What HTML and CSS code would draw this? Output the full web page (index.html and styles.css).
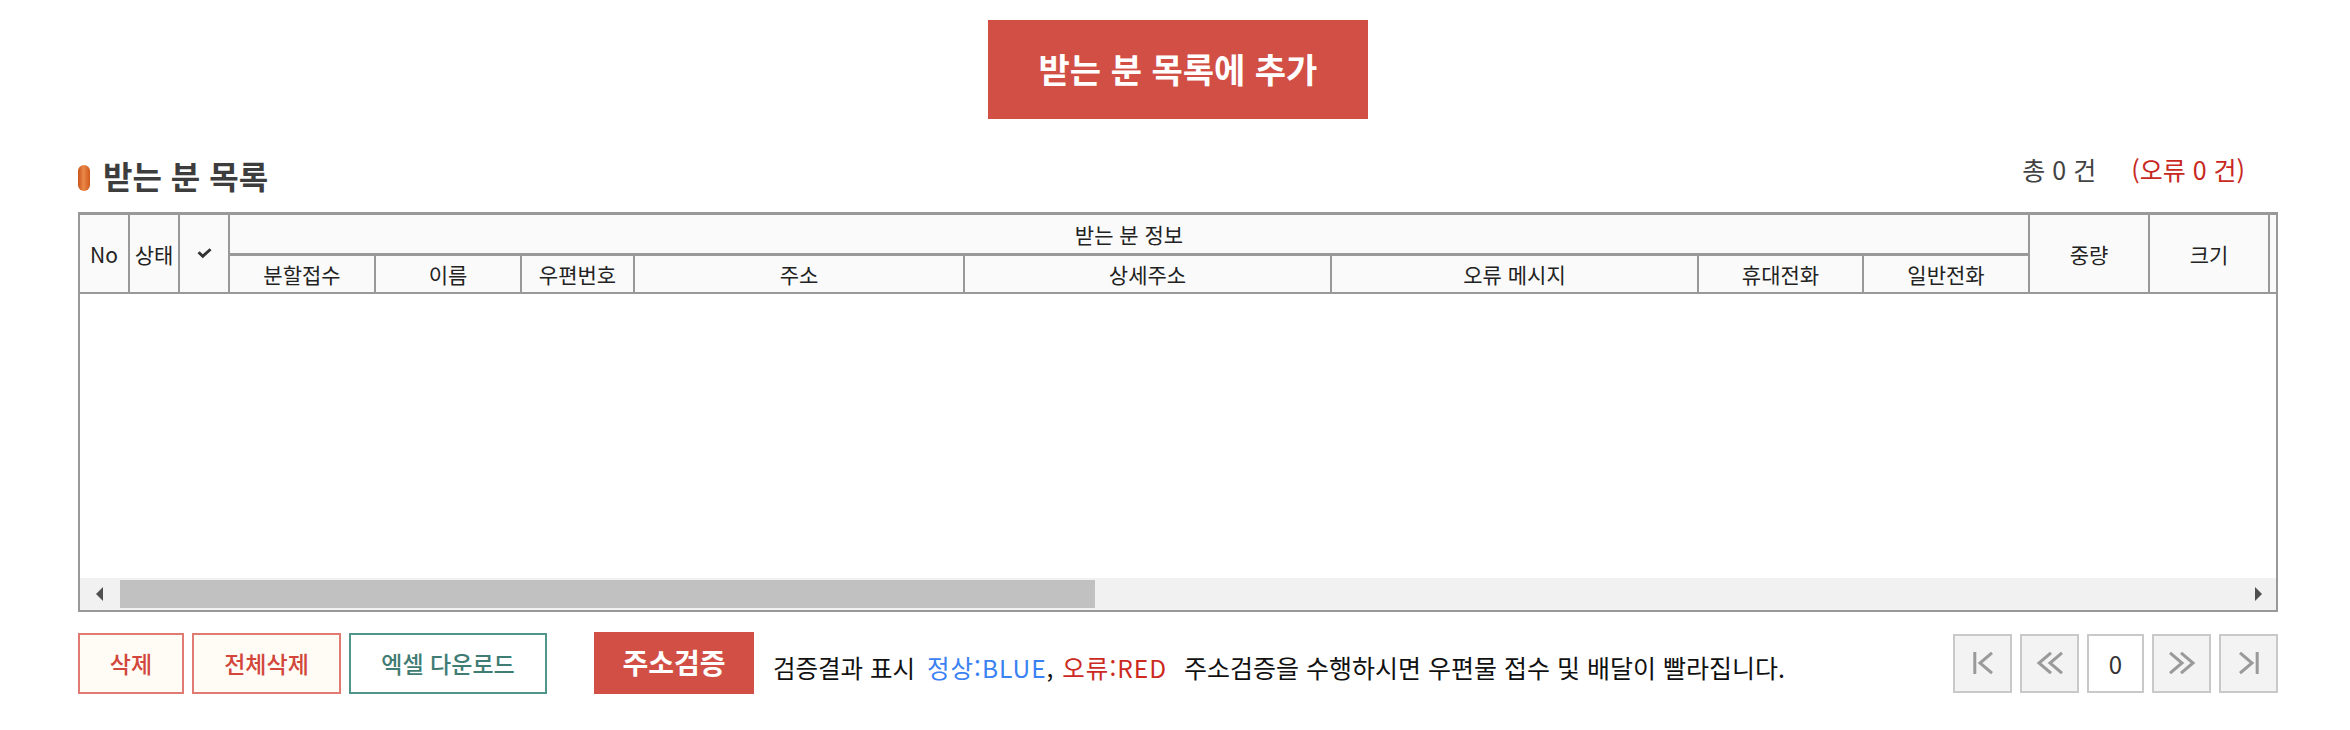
FILE: index.html
```html
<!DOCTYPE html>
<html lang="ko">
<head>
<meta charset="utf-8">
<title>받는 분 목록</title>
<link rel="stylesheet" href="styles.css">
</head>
<body>
<div class="page">
  <div class="top-actions">
    <button class="btn-add" type="button">받는 분 목록에 추가</button>
  </div>

  <div class="list-head">
    <h2 class="list-title"><span class="bullet"></span>받는 분 목록</h2>
    <div class="count">총 0 건 <span class="count-err">(오류 0 건)</span></div>
  </div>

  <div class="grid-box">
    <div class="grid-clip">
      <div class="grid-head">
        <div class="th rows">No</div>
        <div class="th rows">상태</div>
        <div class="th rows"><svg class="chk" width="15" height="11" viewBox="0 0 15 11"><path d="M0.5 5.2 L2.6 3.3 L5.8 6.3 L12.6 0.3 L14.5 2.2 L5.8 10.2 Z" fill="#333"/></svg></div>
        <div class="th group">받는 분 정보</div>
        <div class="th sub">분할접수</div>
        <div class="th sub">이름</div>
        <div class="th sub">우편번호</div>
        <div class="th sub">주소</div>
        <div class="th sub">상세주소</div>
        <div class="th sub">오류 메시지</div>
        <div class="th sub">휴대전화</div>
        <div class="th sub">일반전화</div>
        <div class="th rows">중량</div>
        <div class="th rows">크기</div>
        <div class="th rows"></div>
      </div>
    </div>
    <div class="grid-body"></div>
    <div class="hscroll">
      <span class="sb-arrow sb-left"><svg width="7" height="14" viewBox="0 0 7 14"><polygon points="7,0 0,7 7,14" fill="#505050"/></svg></span>
      <span class="sb-thumb"></span>
      <span class="sb-fill"></span>
      <span class="sb-arrow sb-right"><svg width="7" height="14" viewBox="0 0 7 14"><polygon points="0,0 7,7 0,14" fill="#505050"/></svg></span>
    </div>
  </div>

  <div class="bottom-bar">
    <div class="btn-group">
      <button class="btn-line btn-red btn-del" type="button">삭제</button>
      <button class="btn-line btn-red btn-delall" type="button">전체삭제</button>
      <button class="btn-line btn-teal" type="button">엑셀 다운로드</button>
    </div>
    <button class="btn-verify" type="button">주소검증</button>
    <p class="legend">검증결과 표시 <span class="ok">정상:BLUE</span>, <span class="err">오류:RED</span> <span class="note">주소검증을 수행하시면 우편물 접수 및 배달이 빨라집니다.</span></p>
    <div class="pager">
      <span class="pg"><svg width="20" height="22" viewBox="0 0 20 22"><path d="M1.8 0 V22 M19 0.8 L7 11 L19 21.2" stroke="#9a9a9a" stroke-width="3" fill="none"/></svg></span>
      <span class="pg"><svg width="28" height="22" viewBox="0 0 28 22"><path d="M15 0.8 L3 11 L15 21.2 M26 0.8 L14 11 L26 21.2" stroke="#9a9a9a" stroke-width="3" fill="none"/></svg></span>
      <span class="pg pg-current">0</span>
      <span class="pg"><svg width="28" height="22" viewBox="0 0 28 22"><path d="M2 0.8 L14 11 L2 21.2 M13 0.8 L25 11 L13 21.2" stroke="#9a9a9a" stroke-width="3" fill="none"/></svg></span>
      <span class="pg"><svg width="20" height="22" viewBox="0 0 20 22"><path d="M18.2 0 V22 M1 0.8 L13 11 L1 21.2" stroke="#9a9a9a" stroke-width="3" fill="none"/></svg></span>
    </div>
  </div>
</div>
</body>
</html>
```

FILE: styles.css
```css
* { box-sizing: border-box; }

html, body {
  margin: 0;
  padding: 0;
  background: #fff;
}

body {
  font-family: "Noto Sans CJK KR", "Noto Sans", sans-serif;
  color: #222;
}

.page {
  width: 2200px;
  margin-left: 78px;
  padding-top: 20px;
}

/* top add button */
.top-actions {
  display: flex;
  justify-content: center;
}

.btn-add {
  width: 380px;
  height: 99px;
  border: none;
  background: #d24f46;
  color: #fff;
  font-family: inherit;
  font-size: 34px;
  font-weight: 700;
  padding: 0 0 2px;
}

/* list heading */
.list-head {
  margin-top: 36px;
  height: 40px;
  display: flex;
  justify-content: space-between;
  align-items: center;
}

.list-title {
  margin: 0;
  display: flex;
  align-items: center;
  font-size: 32px;
  font-weight: 700;
  color: #3d3d3d;
  line-height: 40px;
}

.bullet {
  width: 12px;
  height: 26px;
  border-radius: 6px;
  margin-right: 13px;
  margin-top: 6px;
  background: linear-gradient(90deg, #c9531a 0%, #ea8848 45%, #d0591c 100%);
}

.count {
  align-self: flex-start;
  line-height: 28px;
  font-size: 25px;
  color: #424242;
  margin-right: 33px;
}

.count-err {
  color: #c8281e;
  margin-left: 28px;
}

/* grid */
.grid-box {
  margin-top: 17px;
  border: 2px solid #999;
  border-top-width: 3px;
}

.grid-clip {
  overflow: hidden;
}

.grid-head {
  display: grid;
  width: max-content;
  grid-template-columns: 50px 50px 50px 146px 146px 113px 330px 367px 367px 165px 166px 120px 120px 120px;
  grid-template-rows: 41px 38px;
  background: #fafafa;
}

.th {
  display: flex;
  align-items: center;
  justify-content: center;
  border-right: 2px solid #999;
  border-bottom: 2px solid #999;
  font-size: 21px;
  color: #222;
  white-space: nowrap;
}

.th.rows {
  grid-row: 1 / 3;
}

.th.group {
  grid-row: 1;
  grid-column: 4 / 12;
  border-bottom-width: 3px;
}

.th.sub {
  grid-row: 2;
}

.chk {
  display: block;
}

.grid-body {
  height: 284px;
  background: #fff;
}

.hscroll {
  height: 32px;
  background: #f1f1f1;
  display: flex;
  align-items: center;
}

.sb-arrow {
  display: flex;
  align-items: center;
  height: 32px;
}

.sb-left {
  width: 40px;
  padding-left: 16px;
}

.sb-right {
  width: 40px;
  padding-left: 19px;
}

.sb-arrow svg {
  display: block;
}

.sb-thumb {
  width: 975px;
  height: 28px;
  background: #c1c1c1;
}

.sb-fill {
  flex: 1;
}

/* bottom bar */
.bottom-bar {
  margin-top: 20px;
  display: flex;
  align-items: center;
  height: 62px;
}

.btn-group {
  display: flex;
  gap: 8px;
}

.btn-line {
  height: 61px;
  padding: 0;
  border: 2px solid;
  font-family: inherit;
  font-size: 23px;
  font-weight: 500;
  background: #fffcf6;
}

.btn-del {
  width: 106px;
}

.btn-delall {
  width: 149px;
}

.btn-red {
  border-color: #e07a73;
  color: #d2463b;
}

.btn-teal {
  width: 198px;
  border-color: #4f9589;
  color: #3f7d74;
  background: #fff;
}

.btn-verify {
  margin-left: 47px;
  width: 160px;
  height: 62px;
  border: none;
  background: #d24f46;
  color: #fff;
  font-family: inherit;
  font-size: 28px;
  font-weight: 700;
  padding: 0 0 2px;
}

.legend {
  margin: 0 0 0 19px;
  padding-top: 8px;
  font-size: 24.5px;
  color: #111;
  white-space: nowrap;
}

.ok {
  color: #3a82f2;
  margin-left: 5px;
  letter-spacing: 1px;
}

.err {
  color: #cc2a1e;
  margin-left: 2px;
  letter-spacing: 1px;
}

.note {
  margin-left: 10px;
  font-size: 25px;
}

.pager {
  margin-left: auto;
  display: flex;
  gap: 8px;
}

.pg {
  width: 59px;
  height: 59px;
  border: 2px solid #c9c9c9;
  background: #f3f3f3;
  display: flex;
  align-items: center;
  justify-content: center;
}

.pg svg {
  display: block;
}

.pg-current {
  background: #fff;
  width: 57px;
  font-size: 24px;
  color: #333;
}
```
